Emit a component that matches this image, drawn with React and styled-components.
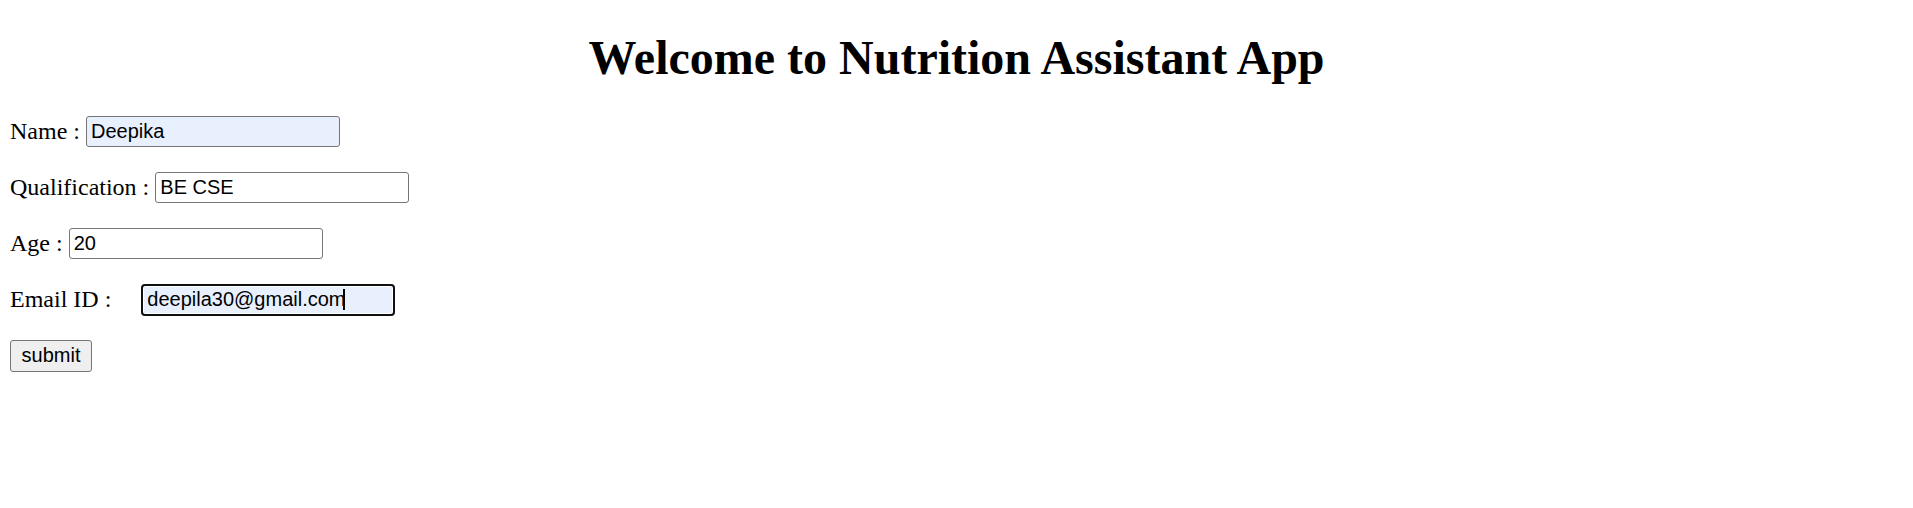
import React from "react";
import styled, { createGlobalStyle } from "styled-components";

const GlobalStyle = createGlobalStyle`
  html, body {
    margin: 0;
    padding: 0;
    background: #ffffff;
    color: #000000;
    font-family: "Liberation Serif", "Times New Roman", serif;
  }
`;

const fields = [
  { label: "Name :", value: "Deepika", filled: true },
  { label: "Qualification :", value: "BE CSE" },
  { label: "Age :", value: "20" },
  { label: "Email ID :", value: "deepila30@gmail.com", filled: true, focused: true, gap: 30 },
];

const App = () => {
  return (
    <Page>
      <GlobalStyle />
      <Title>Welcome to Nutrition Assistant App</Title>
      <Form onSubmit={(e) => e.preventDefault()}>
        {fields.map((f) => (
          <Row key={f.label} $gap={f.gap}>
            <Label>{f.label}</Label>
            <Input
              defaultValue={f.value}
              $filled={f.filled}
              $focused={f.focused}
            />
            {f.focused && <Caret />}
          </Row>
        ))}
        <Row>
          <Button type="submit">submit</Button>
        </Row>
      </Form>
    </Page>
  );
};

export default App;

const Page = styled.div`
  padding: 31px 10px 40px;
`;
const Title = styled.h1`
  margin: 0 0 32px;
  font-size: 48px;
  line-height: 53px;
  font-weight: 700;
  text-align: center;
`;
const Form = styled.form`
  display: flex;
  flex-direction: column;
  gap: 25px;
`;
const Row = styled.div`
  position: relative;
  display: flex;
  align-items: center;
  height: 31px;
  gap: ${(props) => (props.$gap ? props.$gap : 6)}px;
`;
const Label = styled.span`
  font-size: 24px;
  white-space: pre;
`;
const Input = styled.input`
  box-sizing: border-box;
  width: 254px;
  height: ${(props) => (props.$focused ? 32 : 31)}px;
  margin: 0;
  padding: 1px 4px;
  font-family: "Liberation Sans", Arial, sans-serif;
  font-size: 20px;
  color: #000000;
  background: ${(props) => (props.$filled ? "#e8f0fe" : "#ffffff")};
  border: ${(props) =>
    props.$focused ? "2px solid #101010" : "1px solid #767676"};
  border-radius: ${(props) => (props.$focused ? 4 : 3)}px;
  box-shadow: ${(props) => (props.$focused ? "inset 0 0 0 1px #ffffff" : "none")};
  outline: none;
`;
const Caret = styled.span`
  position: absolute;
  left: 333px;
  top: 5px;
  width: 2px;
  height: 21px;
  background: #000000;
`;
const Button = styled.button`
  box-sizing: border-box;
  width: 82px;
  height: 32px;
  padding: 1px 6px;
  font-family: "Liberation Sans", Arial, sans-serif;
  font-size: 20px;
  color: #000000;
  background: #efefef;
  border: 1px solid #767676;
  border-radius: 3px;
`;
